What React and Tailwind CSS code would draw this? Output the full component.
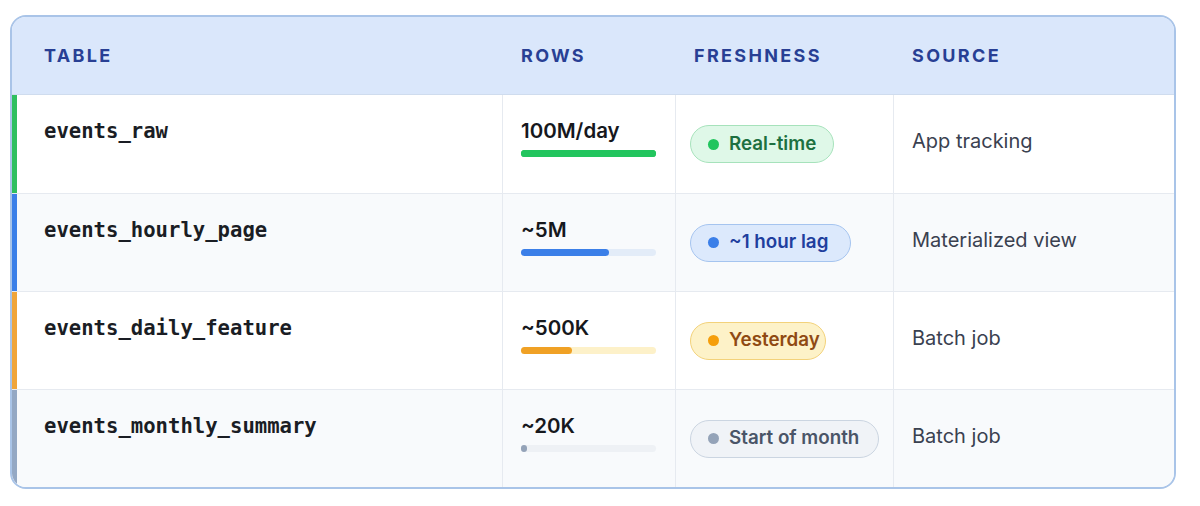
const rows = [
  {
    name: "events_raw",
    rows: "100M/day",
    pct: 100,
    bar: "bg-[#22c55e]",
    track: "bg-[#22c55e]",
    edge: "border-l-[#2fbf5f]",
    bg: "bg-white",
    pill: "bg-[#dff8e8] border-[#a6e2bb] text-[#1d7040] pr-[17px]",
    dot: "bg-[#22c55e]",
    label: "Real-time",
    source: "App tracking",
  },
  {
    name: "events_hourly_page",
    rows: "~5M",
    pct: 65,
    bar: "bg-[#3b7fe8]",
    track: "bg-[#e3ecf8]",
    edge: "border-l-[#3b7fe8]",
    bg: "bg-[#f8fafc]",
    pill: "bg-[#dce9fc] border-[#a5c4ef] text-[#1f3f9e] pr-[22px]",
    dot: "bg-[#3b7fe8]",
    label: "~1 hour lag",
    source: "Materialized view",
  },
  {
    name: "events_daily_feature",
    rows: "~500K",
    pct: 38,
    bar: "bg-[#f0a125]",
    track: "bg-[#fdf1c9]",
    edge: "border-l-[#f0a53a]",
    bg: "bg-white",
    pill: "bg-[#fdf2c8] border-[#f3d27a] text-[#8f4a13] pr-[5px]",
    dot: "bg-[#f59e0b]",
    label: "Yesterday",
    source: "Batch job",
  },
  {
    name: "events_monthly_summary",
    rows: "~20K",
    pct: 4,
    bar: "bg-[#94a3b8]",
    track: "bg-[#eef1f5]",
    edge: "border-l-[#94a8c4]",
    bg: "bg-[#f8fafc]",
    pill: "bg-[#f0f3f7] border-[#cbd5e1] text-[#4a5568] pr-[19px]",
    dot: "bg-[#94a3b8]",
    label: "Start of month",
    source: "Batch job",
  },
];

const sans = { fontFamily: "Inter, 'Noto Sans', sans-serif" };

export default function App() {
  return (
    <div className="w-[1200px] h-[506px] bg-white pt-[15px] pl-[10px]" style={sans}>
      <div className="w-[1166px] border-2 border-[#a9c4e8] rounded-[16px] overflow-hidden bg-white">
        <div className="grid grid-cols-[490px_173px_218px_281px] h-[78px] bg-[#dae7fb] border-b border-[#cfdcee] items-center text-[18px] font-bold tracking-[0.13em] text-[#283f94]">
          <div className="pl-[32px]">TABLE</div>
          <div className="pl-[19px]">ROWS</div>
          <div className="pl-[19px]">FRESHNESS</div>
          <div className="pl-[19px]">SOURCE</div>
        </div>
        {rows.map((r, i) => (
          <div
            key={r.name}
            className={`grid grid-cols-[490px_173px_218px_281px] h-[98px] ${r.bg} ${i > 0 ? "border-t border-[#e6eaf0]" : ""}`}
          >
            <div className={`border-l-[5px] ${r.edge} pl-[27px] pt-[24px]`}>
              <div
                className="text-[20.6px] leading-[24px] font-bold text-[#1a1d24]"
                style={{ fontFamily: "'DejaVu Sans Mono', monospace" }}
              >
                {r.name}
              </div>
            </div>
            <div className="border-l border-[#e6eaf0] pl-[18px] pt-[24px]">
              <div className="text-[20.5px] leading-[24px] font-semibold text-[#16181d]">{r.rows}</div>
              <div className={`mt-[7px] w-[135px] h-[7px] rounded-full ${r.track}`}>
                <div
                  className={`h-[7px] rounded-full ${r.bar}`}
                  style={{ width: r.pct === 4 ? "6px" : `${r.pct}%` }}
                />
              </div>
            </div>
            <div className="border-l border-[#e6eaf0] pl-[14px] flex items-center">
              <div
                className={`flex items-center gap-[10px] h-[38px] pl-[17px] rounded-full border-[1.5px] text-[18.8px] font-semibold ${r.pill}`}
              >
                <span className={`w-[11px] h-[11px] rounded-full shrink-0 ${r.dot}`} />
                <span className="whitespace-nowrap">{r.label}</span>
              </div>
            </div>
            <div className="border-l border-[#e6eaf0] pl-[18px] flex items-center pb-[6px]">
              <span className="text-[20px] text-[#3a4150]">{r.source}</span>
            </div>
          </div>
        ))}
      </div>
    </div>
  );
}
